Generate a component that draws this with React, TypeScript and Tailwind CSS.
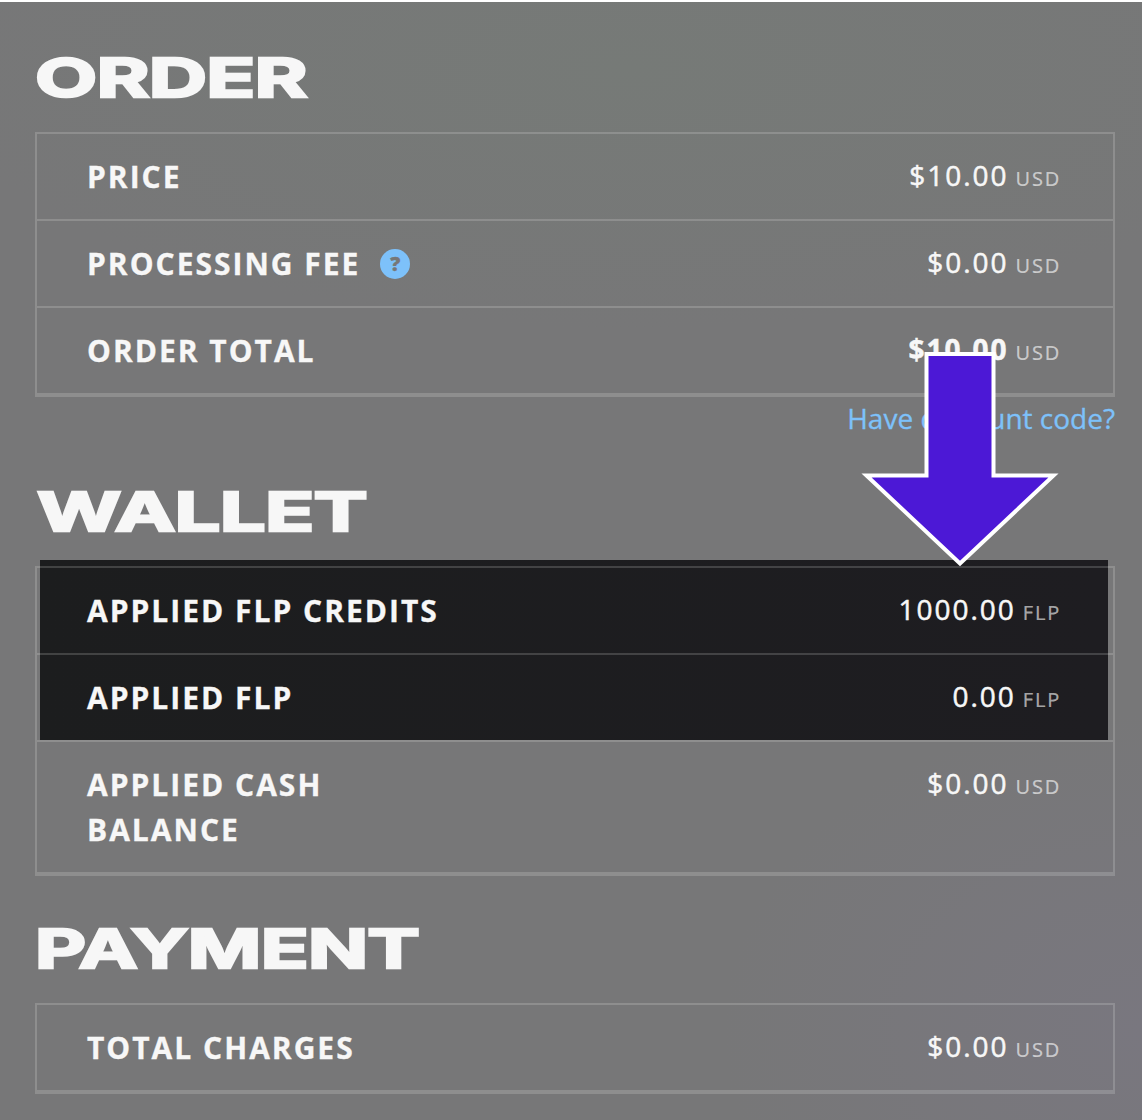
import type { ReactNode } from 'react';

type RowProps = { label: ReactNode; amount: string; unit: string; bold?: boolean };

function Row({ label, amount, unit, bold }: RowProps) {
  return (
    <div className="flex justify-between items-start border-b-2 border-white/17 pl-[50px] pr-[52px] py-5">
      <div className="text-[30px] leading-[45px] font-bold tracking-[2px] uppercase [-webkit-text-stroke:0.3px]">{label}</div>
      <div className={`-mt-px text-[28px] leading-[45px] tracking-[2px] whitespace-nowrap [-webkit-text-stroke:0.5px] ${bold ? 'font-bold' : ''}`}>
        {amount}
        <span className="ml-[7px] text-[20px] leading-none font-normal tracking-[1.8px] text-white/60 [-webkit-text-stroke:0.2px]">{unit}</span>
      </div>
    </div>
  );
}

function Heading({ children, className }: { children: string; className: string }) {
  return (
    <h2 className={`w-fit origin-left whitespace-nowrap font-['Inter'] font-bold text-[54px] leading-[60px] mb-6 tracking-[-0.5px] [-webkit-text-stroke:2.4px_#f7f7f7] ${className}`}>
      {children}
    </h2>
  );
}

function Panel({ children }: { children: ReactNode }) {
  return <div className="border-2 border-white/17">{children}</div>;
}

export default function App() {
  return (
    <div className="relative isolate h-[1120px] w-[1142px] overflow-hidden border-t-2 border-white bg-[#777778] bg-[radial-gradient(ellipse_700px_260px_at_55%_6%,#767a77,transparent),radial-gradient(ellipse_420px_320px_at_100%_92%,#79777f,transparent)] bg-clip-padding pl-[35px] pr-[27px] font-['Open_Sans','Noto_Sans',sans-serif] text-[#f7f7f7]">
      <section className="pt-[46px]">
        <Heading className="scale-x-[1.495]">ORDER</Heading>
        <Panel>
          <Row label="Price" amount="$10.00" unit="USD" />
          <Row
            label={
              <span className="flex items-center gap-5">
                Processing Fee
                <span className="flex size-[30px] items-center justify-center rounded-full bg-[#7dc1fa] text-[20px] leading-none font-extrabold tracking-normal text-[#777]">?</span>
              </span>
            }
            amount="$0.00"
            unit="USD"
          />
          <Row label="Order Total" amount="$10.00" unit="USD" bold />
        </Panel>
        <p className="-mt-px mb-px text-right text-[28px] leading-[44px] text-[#7dc1fa] [-webkit-text-stroke:0.3px]">Have discount code?</p>
      </section>

      <section className="pt-[41px]">
        <Heading className="ml-0.5 scale-x-[1.504]">WALLET</Heading>
        <div className="relative">
          {/* highlight behind the FLP rows */}
          <div className="absolute -top-1.5 left-[5px] -z-10 h-[180px] w-[1068px] bg-linear-to-r from-[#1c1d1e] to-[#1e1d21]" />
          <Panel>
            <Row label="Applied FLP Credits" amount="1000.00" unit="FLP" />
            <Row label="Applied FLP" amount="0.00" unit="FLP" />
            <Row label={<>Applied Cash<br />Balance</>} amount="$0.00" unit="USD" />
          </Panel>
        </div>
      </section>

      <section className="pt-[43px]">
        <Heading className="scale-x-[1.462]">PAYMENT</Heading>
        <Panel>
          <Row label="Total Charges" amount="$0.00" unit="USD" />
        </Panel>
      </section>

      <svg className="absolute top-[348px] left-[858px]" width="204" height="220" viewBox="0 0 204 220">
        <path d="M68.5 4H135.5V125.5H195.5L102 213.5L8.5 125.5H68.5Z" fill="#4c18d6" stroke="#fff" strokeWidth="4" />
      </svg>
    </div>
  );
}
